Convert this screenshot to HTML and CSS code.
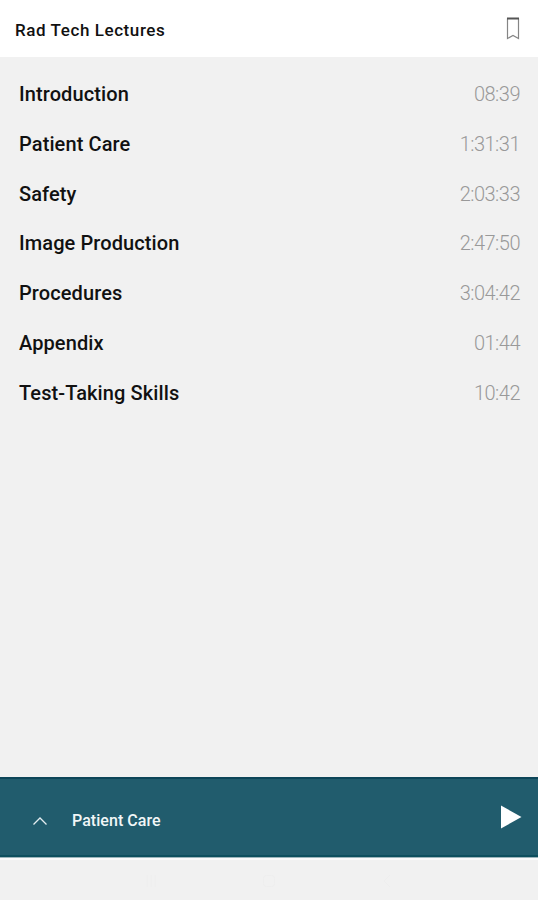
FILE: index.html
```html
<!DOCTYPE html>
<html lang="en">

<head>
    <meta charset="UTF-8">
    <meta name="viewport" content="width=device-width, initial-scale=1.0">
    <title>Rad Tech Lectures</title>
    <link rel="stylesheet" href="styles.css">
</head>

<body>
    <header>
        <h1>Rad Tech Lectures</h1>
        <svg class="bookmark" width="14" height="23" viewBox="0 0 14 23">
            <path d="M1.5 1.5V21.5L7 18.5L12.5 21.5V1.5" fill="none" stroke="#858585" stroke-width="1.2"/>
            <path d="M1 1.5H13" stroke="#555" stroke-width="2"/>
        </svg>
    </header>

    <main>
        <ul class="lectures">
            <li><span>Introduction</span><span class="time">08:39</span></li>
            <li><span>Patient Care</span><span class="time">1:31:31</span></li>
            <li><span>Safety</span><span class="time">2:03:33</span></li>
            <li><span>Image Production</span><span class="time">2:47:50</span></li>
            <li><span>Procedures</span><span class="time">3:04:42</span></li>
            <li><span>Appendix</span><span class="time">01:44</span></li>
            <li><span>Test-Taking Skills</span><span class="time">10:42</span></li>
        </ul>
    </main>

    <div class="player">
        <svg class="up" width="16" height="10" viewBox="0 0 16 10">
            <path d="M1.5 8.5L8 2L14.5 8.5" fill="none" stroke="#e4edf0" stroke-width="1.3"/>
        </svg>
        <span class="playing">Patient Care</span>
        <svg class="play" width="22" height="24" viewBox="0 0 22 24">
            <path d="M1 .5L21.5 12L1 23.5Z" fill="#fff"/>
        </svg>
    </div>

    <footer>
        <svg width="14" height="14" viewBox="0 0 14 14"><path d="M3 1V13M7 1V13M11 1V13"/></svg>
        <svg width="14" height="14" viewBox="0 0 14 14"><rect x="1.5" y="1.5" width="11" height="11" rx="3"/></svg>
        <svg width="14" height="14" viewBox="0 0 14 14"><path d="M10 1L4 7L10 13"/></svg>
    </footer>
</body>

</html>
```

FILE: styles.css
```css
* {
    box-sizing: border-box;
}

body {
    margin: 0;
    height: 900px;
    display: flex;
    flex-direction: column;
    background-color: #f1f1f1;
    color: #111;
    font-family: Roboto, sans-serif;
}

header {
    height: 57px;
    padding: 2px 18px 0 15px;
    display: flex;
    align-items: center;
    justify-content: space-between;
    background-color: white;
}

h1 {
    margin: 0;
    font-size: 17px;
    font-weight: 500;
    letter-spacing: 0.58px;
}

.bookmark {
    margin-bottom: 2px;
}

main {
    flex: 1;
    padding-top: 12px;
}

.lectures {
    margin: 0;
    padding: 0 18px 0 19px;
    list-style: none;
}

.lectures li {
    height: 49.85px;
    display: flex;
    align-items: center;
    justify-content: space-between;
    font-size: 20px;
    font-weight: 500;
    letter-spacing: 0.1px;
}

.lectures .time {
    color: #999;
    font-weight: 300;
    letter-spacing: -0.5px;
}

.player {
    height: 80px;
    padding: 0 16px 0 32px;
    display: flex;
    align-items: center;
    background-color: #215c6d;
    border-top: 2px solid #0d4659;
    border-bottom: 2px solid #0d4f5e;
}

.playing {
    flex: 1;
    padding: 7px 0 0 24px;
    color: #f1f6f7;
    font-size: 16px;
    font-weight: 500;
    letter-spacing: 0.05px;
}

.up {
    margin-top: 8px;
}

footer {
    height: 43px;
    padding: 3px 144px 0;
    display: flex;
    align-items: center;
    justify-content: space-between;
    border-top: 1px solid #9db6bc;
    box-shadow: inset 0 2px #fafafa;
}

footer svg {
    fill: none;
    stroke: #eeeeee;
}
```
